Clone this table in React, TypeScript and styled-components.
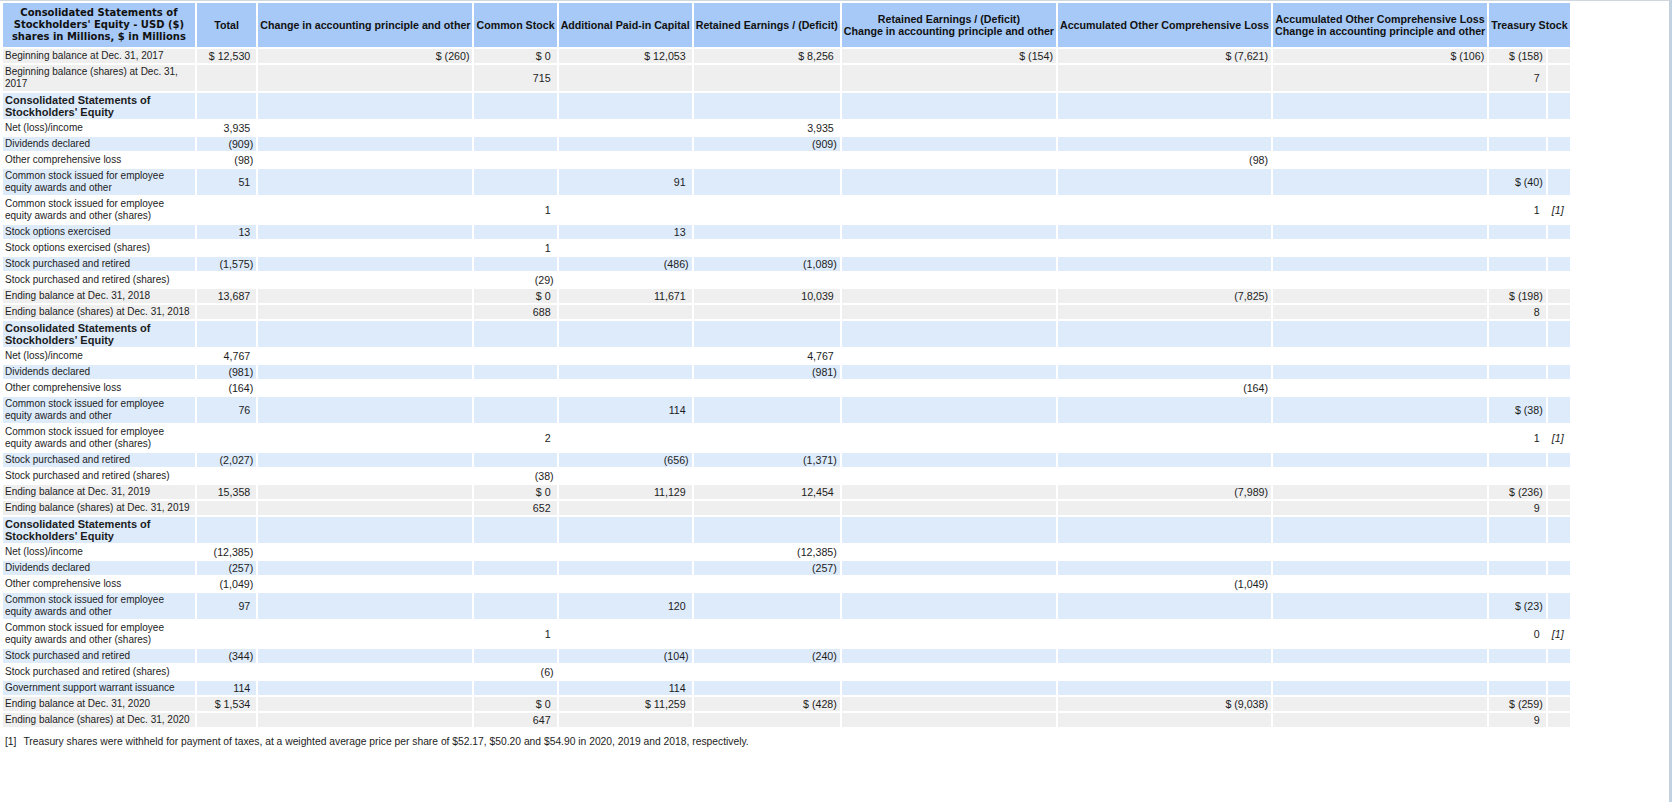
import React from 'react';
import styled, { createGlobalStyle } from 'styled-components';

const Global = createGlobalStyle`
  html, body { margin: 0; padding: 0; background: #ffffff; }
  body {
    font-family: "Liberation Sans", Arial, Helvetica, sans-serif;
    font-size: 10.667px;
    color: #1c1c1c;
  }
`;

const Frame = styled.div`
  box-sizing: border-box;
  width: 1672px;
  height: 802px;
  border-top: 1px solid #cfd6dd;
  border-right: 3px solid #c3d2e1;
  overflow: hidden;
`;

const Report = styled.table`
  border-collapse: separate;
  border-spacing: 2px;
  empty-cells: show;
  margin: 0 0 0 1px;
  font-family: "Liberation Sans", Arial, Helvetica, sans-serif;
  font-size: 10.667px;
  line-height: 12px;
  color: #1c1c1c;
`;

const HeadRow = styled.tr`
  background: #a6c9f7;
`;

const TitleCell = styled.th`
  padding: 4px 2px;
  font-family: "DejaVu Sans", Verdana, sans-serif;
  font-size: 10px;
  font-weight: bold;
  line-height: 12px;
  text-align: center;
  vertical-align: middle;
  color: #111;
`;

const TitleText = styled.div`
  width: 187.8px;
`;

const ColHead = styled.th`
  padding: 1px 2px;
  font-weight: bold;
  white-space: nowrap;
  text-align: center;
  vertical-align: middle;
  color: #111;
`;

const tones = { g: '#efefef', b: '#ddebfb', w: '#ffffff' } as const;
type Tone = keyof typeof tones;

const Row = styled.tr<{ $tone: Tone }>`
  background: ${(p) => tones[p.$tone]};
`;

const Label = styled.td<{ $section?: boolean }>`
  width: 187.8px;
  padding: 1px 2px;
  text-align: left;
  vertical-align: top;
  white-space: normal;
  font-size: ${(p) => (p.$section ? '11px' : '10px')};
  font-weight: ${(p) => (p.$section ? 'bold' : 'normal')};
`;

const Num = styled.td`
  padding: 1px 3px 1px 12px;
  text-align: right;
  white-space: nowrap;
  vertical-align: middle;
`;

const PosGap = styled.span`
  display: inline-block;
  width: 3px;
`;

const Fn = styled.td`
  padding: 1px 3px 1px 4px;
  text-align: left;
  white-space: nowrap;
  vertical-align: middle;
  font-style: italic;
`;

const Footnotes = styled.div`
  display: flex;
  gap: 7px;
  padding: 7px 0 0 5px;
  font-family: "Liberation Sans", Arial, Helvetica, sans-serif;
  font-size: 10.3px;
  line-height: 12px;
  color: #1c1c1c;
`;

type Header = { lines: string[]; span?: number };

const headers: Header[] = [
  { lines: ['Total'] },
  { lines: ['Change in accounting principle and other'] },
  { lines: ['Common Stock'] },
  { lines: ['Additional Paid-in Capital'] },
  { lines: ['Retained Earnings / (Deficit)'] },
  { lines: ['Retained Earnings / (Deficit)', 'Change in accounting principle and other'] },
  { lines: ['Accumulated Other Comprehensive Loss'] },
  { lines: ['Accumulated Other Comprehensive Loss', 'Change in accounting principle and other'] },
  { lines: ['Treasury Stock'], span: 2 },
];

type RowData = {
  label: string;
  tone: Tone;
  section?: boolean;
  v?: Record<number, string>;
  fn?: boolean;
};

const SECTION = "Consolidated Statements of Stockholders' Equity";

const rows: RowData[] = [
  { label: 'Beginning balance at Dec. 31, 2017', tone: 'g', v: { 0: '$ 12,530', 1: '$ (260)', 2: '$ 0', 3: '$ 12,053', 4: '$ 8,256', 5: '$ (154)', 6: '$ (7,621)', 7: '$ (106)', 8: '$ (158)' } },
  { label: 'Beginning balance (shares) at Dec. 31, 2017', tone: 'g', v: { 2: '715', 8: '7' } },
  { label: SECTION, tone: 'b', section: true },
  { label: 'Net (loss)/income', tone: 'w', v: { 0: '3,935', 4: '3,935' } },
  { label: 'Dividends declared', tone: 'b', v: { 0: '(909)', 4: '(909)' } },
  { label: 'Other comprehensive loss', tone: 'w', v: { 0: '(98)', 6: '(98)' } },
  { label: 'Common stock issued for employee equity awards and other', tone: 'b', v: { 0: '51', 3: '91', 8: '$ (40)' } },
  { label: 'Common stock issued for employee equity awards and other (shares)', tone: 'w', v: { 2: '1', 8: '1' }, fn: true },
  { label: 'Stock options exercised', tone: 'b', v: { 0: '13', 3: '13' } },
  { label: 'Stock options exercised (shares)', tone: 'w', v: { 2: '1' } },
  { label: 'Stock purchased and retired', tone: 'b', v: { 0: '(1,575)', 3: '(486)', 4: '(1,089)' } },
  { label: 'Stock purchased and retired (shares)', tone: 'w', v: { 2: '(29)' } },
  { label: 'Ending balance at Dec. 31, 2018', tone: 'g', v: { 0: '13,687', 2: '$ 0', 3: '11,671', 4: '10,039', 6: '(7,825)', 8: '$ (198)' } },
  { label: 'Ending balance (shares) at Dec. 31, 2018', tone: 'g', v: { 2: '688', 8: '8' } },
  { label: SECTION, tone: 'b', section: true },
  { label: 'Net (loss)/income', tone: 'w', v: { 0: '4,767', 4: '4,767' } },
  { label: 'Dividends declared', tone: 'b', v: { 0: '(981)', 4: '(981)' } },
  { label: 'Other comprehensive loss', tone: 'w', v: { 0: '(164)', 6: '(164)' } },
  { label: 'Common stock issued for employee equity awards and other', tone: 'b', v: { 0: '76', 3: '114', 8: '$ (38)' } },
  { label: 'Common stock issued for employee equity awards and other (shares)', tone: 'w', v: { 2: '2', 8: '1' }, fn: true },
  { label: 'Stock purchased and retired', tone: 'b', v: { 0: '(2,027)', 3: '(656)', 4: '(1,371)' } },
  { label: 'Stock purchased and retired (shares)', tone: 'w', v: { 2: '(38)' } },
  { label: 'Ending balance at Dec. 31, 2019', tone: 'g', v: { 0: '15,358', 2: '$ 0', 3: '11,129', 4: '12,454', 6: '(7,989)', 8: '$ (236)' } },
  { label: 'Ending balance (shares) at Dec. 31, 2019', tone: 'g', v: { 2: '652', 8: '9' } },
  { label: SECTION, tone: 'b', section: true },
  { label: 'Net (loss)/income', tone: 'w', v: { 0: '(12,385)', 4: '(12,385)' } },
  { label: 'Dividends declared', tone: 'b', v: { 0: '(257)', 4: '(257)' } },
  { label: 'Other comprehensive loss', tone: 'w', v: { 0: '(1,049)', 6: '(1,049)' } },
  { label: 'Common stock issued for employee equity awards and other', tone: 'b', v: { 0: '97', 3: '120', 8: '$ (23)' } },
  { label: 'Common stock issued for employee equity awards and other (shares)', tone: 'w', v: { 2: '1', 8: '0' }, fn: true },
  { label: 'Stock purchased and retired', tone: 'b', v: { 0: '(344)', 3: '(104)', 4: '(240)' } },
  { label: 'Stock purchased and retired (shares)', tone: 'w', v: { 2: '(6)' } },
  { label: 'Government support warrant issuance', tone: 'b', v: { 0: '114', 3: '114' } },
  { label: 'Ending balance at Dec. 31, 2020', tone: 'g', v: { 0: '$ 1,534', 2: '$ 0', 3: '$ 11,259', 4: '$ (428)', 6: '$ (9,038)', 8: '$ (259)' } },
  { label: 'Ending balance (shares) at Dec. 31, 2020', tone: 'g', v: { 2: '647', 8: '9' } },
];

const NumValue: React.FC<{ value?: string }> = ({ value }) => {
  if (!value) return <Num />;
  const text = value.replace('$ ', '$\u00a0');
  const negative = value.trim().endsWith(')');
  return (
    <Num>
      {text}
      {!negative && <PosGap />}
    </Num>
  );
};

export default function App() {
  return (
    <Frame>
      <Global />
      <Report>
        <thead>
          <HeadRow>
            <TitleCell>
              <TitleText>
                Consolidated Statements of Stockholders' Equity - USD ($)
                <br />
                shares in Millions, $ in Millions
              </TitleText>
            </TitleCell>
            {headers.map((h, i) => (
              <ColHead key={i} colSpan={h.span ?? 1}>
                {h.lines.map((l, j) => (
                  <React.Fragment key={j}>
                    {j > 0 && <br />}
                    {l}
                  </React.Fragment>
                ))}
              </ColHead>
            ))}
          </HeadRow>
        </thead>
        <tbody>
          {rows.map((r, i) => (
            <Row key={i} $tone={r.tone}>
              <Label $section={r.section}>{r.label}</Label>
              {Array.from({ length: 9 }, (_, c) => (
                <NumValue key={c} value={r.v?.[c]} />
              ))}
              <Fn>{r.fn ? '[1]' : ''}</Fn>
            </Row>
          ))}
        </tbody>
      </Report>
      <Footnotes>
        <span>[1]</span>
        <span>
          Treasury shares were withheld for payment of taxes, at a weighted average price per share of $52.17, $50.20 and
          $54.90 in 2020, 2019 and 2018, respectively.
        </span>
      </Footnotes>
    </Frame>
  );
}
